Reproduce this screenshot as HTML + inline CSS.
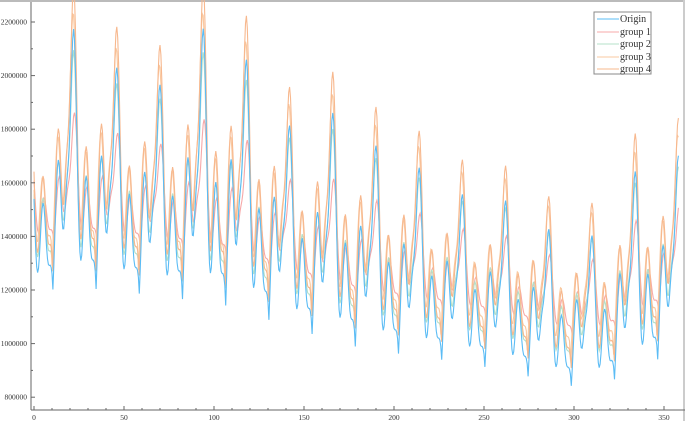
<!DOCTYPE html>
<html><head><meta charset="utf-8"><style>
html,body{margin:0;padding:0;background:#fff;width:685px;height:421px;overflow:hidden}
svg{display:block}
text{font-family:"Liberation Serif",serif;fill:#333}
</style></head><body>
<svg id="s" width="685" height="421" xmlns="http://www.w3.org/2000/svg">
<rect x="0" y="0" width="685" height="2" fill="#bbb"/>
<rect x="683" y="0" width="2" height="421" fill="#ccc"/>
<g id="lines" fill="none" stroke-width="1.1"></g>
<line x1="31" y1="2" x2="31" y2="410" stroke="#666"/>
<line x1="31" y1="410" x2="685" y2="410" stroke="#666"/>
<g id="ax" font-size="7.5"></g>
<g>
<rect x="594" y="12" width="57" height="62" fill="#fff" stroke="#888"/>
<line x1="597" y1="19" x2="619" y2="19" stroke="#5bbcf5"/><text x="620" y="22" font-size="10">Origin</text>
<line x1="597" y1="32" x2="619" y2="32" stroke="#f7a8a8"/><text x="620" y="35" font-size="10">group 1</text>
<line x1="597" y1="44" x2="619" y2="44" stroke="#b5e0c8"/><text x="620" y="47" font-size="10">group 2</text>
<line x1="597" y1="57" x2="619" y2="57" stroke="#f9c9a0"/><text x="620" y="60" font-size="10">group 3</text>
<line x1="597" y1="69" x2="619" y2="69" stroke="#f7b88e"/><text x="620" y="72" font-size="10">group 4</text>
</g>
</svg>
<script>
var ns="http://www.w3.org/2000/svg";
function Y(v){return 22+(2200000-v)/200000*53.6;}
function X(t){return 34+t*1.8;}
var ax=document.getElementById('ax'),h='';
for(var v=800000;v<=2200000;v+=200000){h+='<text x="27" y="'+(Y(v)+2.5)+'" text-anchor="end">'+v+'</text><line x1="31" x2="35" y1="'+Y(v)+'" y2="'+Y(v)+'" stroke="#666"/>';
 h+='<line x1="31" x2="33" y1="'+Y(v-100000)+'" y2="'+Y(v-100000)+'" stroke="#666"/>';}
for(var t=0;t<=350;t+=10){var l=(t%50==0)?4:2;h+='<line x1="'+X(t)+'" x2="'+X(t)+'" y1="410" y2="'+(410-l)+'" stroke="#666"/>';}
for(var t=0;t<=350;t+=50){h+='<text x="'+X(t)+'" y="420" text-anchor="middle">'+t+'</text>';}
ax.innerHTML=h;
var pk=[[-2,1820000],[22,2170000],[47,2020000],[71,1960000],[95,2180000],[119,2050000],[143,1800000],[167,1860000],[191,1730000],[215,1650000],[239,1550000],[263,1530000],[287,1420000],[311,1400000],[335,1650000],[359,1700000]];
function interp(arr,t){for(var i=0;i<arr.length-1;i++){if(t<=arr[i+1][0]){var a=arr[i],b=arr[i+1],f=(t-a[0])/(b[0]-a[0]);return a[1]+(b[1]-a[1])*f;}}return arr[arr.length-1][1];}
var base=[[0,1120000],[60,1100000],[120,1020000],[180,900000],[240,860000],[300,780000],[320,790000],[360,900000]];
function g(x,w){return Math.exp(-x*x/(2*w*w));}
function shape(t){var p=((t-22)%24+24)%24;if(p>12)p-=24;
 var s=g(p,2.0)+0.65*g(p+8.5,1.9)+0.55*g(p-7,1.8)+0.35*g(p+4,1.3)+0.25*g(p-11.5,1.5);
 return Math.max(0,(s-0.1)/0.9);}
function series(kind){var pts=[];for(var t=0;t<=358;t+=0.5){var b=interp(base,t),P=interp(pk,t),s=shape(t),v;
 var amp=P-b;
 if(kind==0)v=b+amp*s;
 else if(kind==1)v=b+220000+(amp*0.5)*shape(t-0.5);
 else if(kind==2)v=b+80000+amp*0.85*s;
 else if(kind==3)v=b+120000+amp*0.95*shape(t+0.3);
 else v=b+60000+amp*1.1*s;
 pts.push(X(t).toFixed(1)+','+Y(v).toFixed(1));}return pts.join(' ');}
var cols=['#f7a8a8','#b5e0c8','#f9c9a0','#f7b88e','#5bbcf5'],kinds=[1,2,3,4,0];
var g1=document.getElementById('lines');
for(var i=0;i<5;i++){var pl=document.createElementNS(ns,'polyline');pl.setAttribute('points',series(kinds[i]));pl.setAttribute('stroke',cols[i]);g1.appendChild(pl);}
</script>
</body></html>
